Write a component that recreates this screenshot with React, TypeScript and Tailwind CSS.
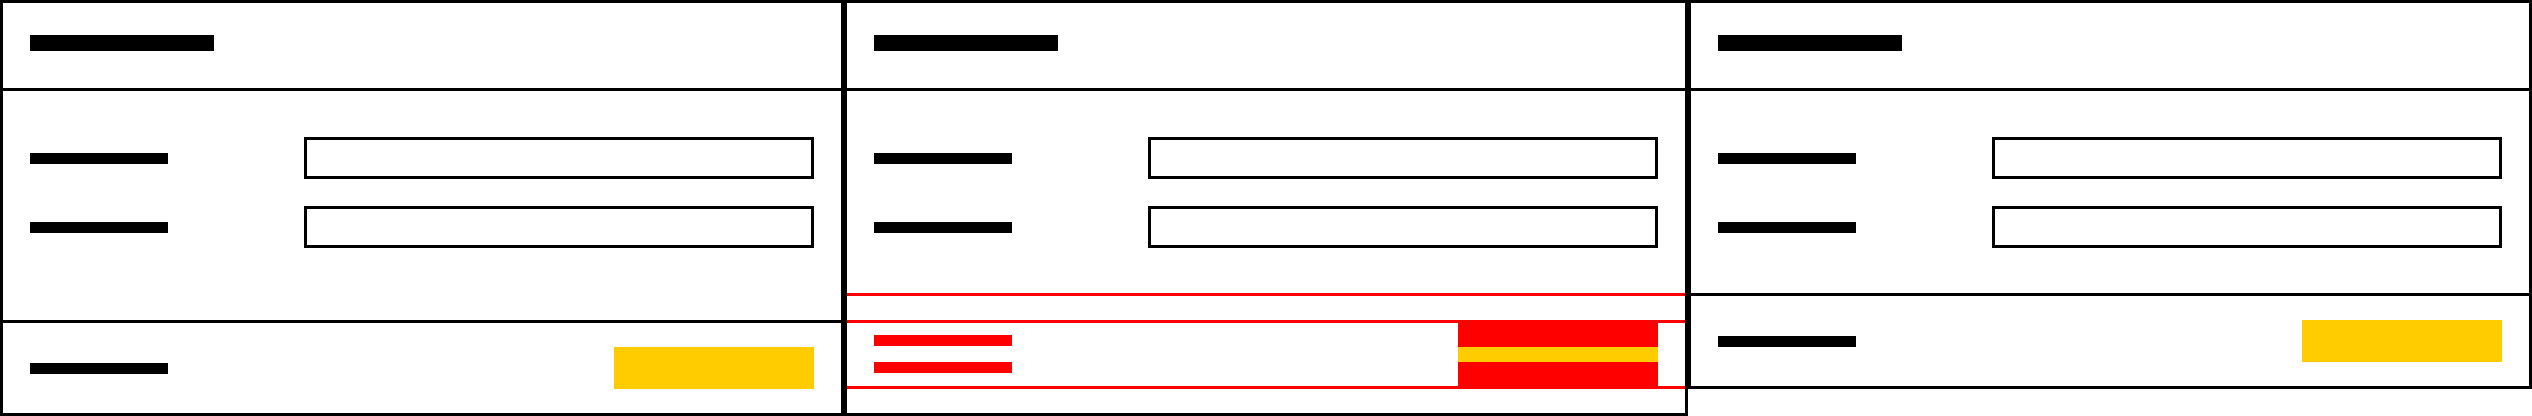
import React from "react";

function Header() {
  return (
    <div className="h-[88px] shrink-0 border-b-[3px] border-black pl-[27px] pt-[32px]">
      <div className="h-[16px] w-[184px] bg-black" />
    </div>
  );
}

function FieldRow() {
  return (
    <div className="flex items-center">
      <div className="w-[274px] shrink-0">
        <div className="h-[11px] w-[138px] bg-black" />
      </div>
      <div className="h-[42px] flex-1 border-[3px] border-black bg-white" />
    </div>
  );
}

function Body({ grow }: { grow?: boolean }) {
  return (
    <div
      className={
        "flex flex-col gap-[27px] px-[27px] pt-[46px] pb-[45px] " +
        (grow ? "flex-1" : "")
      }
    >
      <FieldRow />
      <FieldRow />
    </div>
  );
}

function Footer() {
  return (
    <div className="flex h-[93px] shrink-0 items-center justify-between border-t-[3px] border-black px-[27px]">
      <div className="h-[11px] w-[138px] bg-black" />
      <div className="h-[42px] w-[200px] bg-[#ffcc00]" />
    </div>
  );
}

function DiffFooter() {
  return (
    <div className="flex flex-col">
      <div className="h-[30px] border-y-[3px] border-[#ff0000]" />
      <div className="flex h-[66px] justify-between border-b-[3px] border-[#ff0000] px-[27px]">
        <div className="flex flex-col gap-[16px] pt-[12px]">
          <div className="h-[11px] w-[138px] bg-[#ff0000]" />
          <div className="h-[11px] w-[138px] bg-[#ff0000]" />
        </div>
        <div className="flex w-[200px] flex-col">
          <div className="h-[24px] bg-[#ff0000]" />
          <div className="h-[15px] bg-[#ffcc00]" />
          <div className="h-[24px] bg-[#ff0000]" />
        </div>
      </div>
    </div>
  );
}

export default function App() {
  return (
    <div className="flex h-[416px] w-[2532px] items-start bg-white">
      <div className="flex h-[416px] w-[844px] flex-col border-[3px] border-black">
        <Header />
        <Body grow />
        <Footer />
      </div>
      <div className="flex h-[416px] w-[844px] flex-col border-[3px] border-black">
        <Header />
        <Body />
        <DiffFooter />
      </div>
      <div className="flex w-[844px] flex-col border-[3px] border-black">
        <Header />
        <Body />
        <Footer />
      </div>
    </div>
  );
}
